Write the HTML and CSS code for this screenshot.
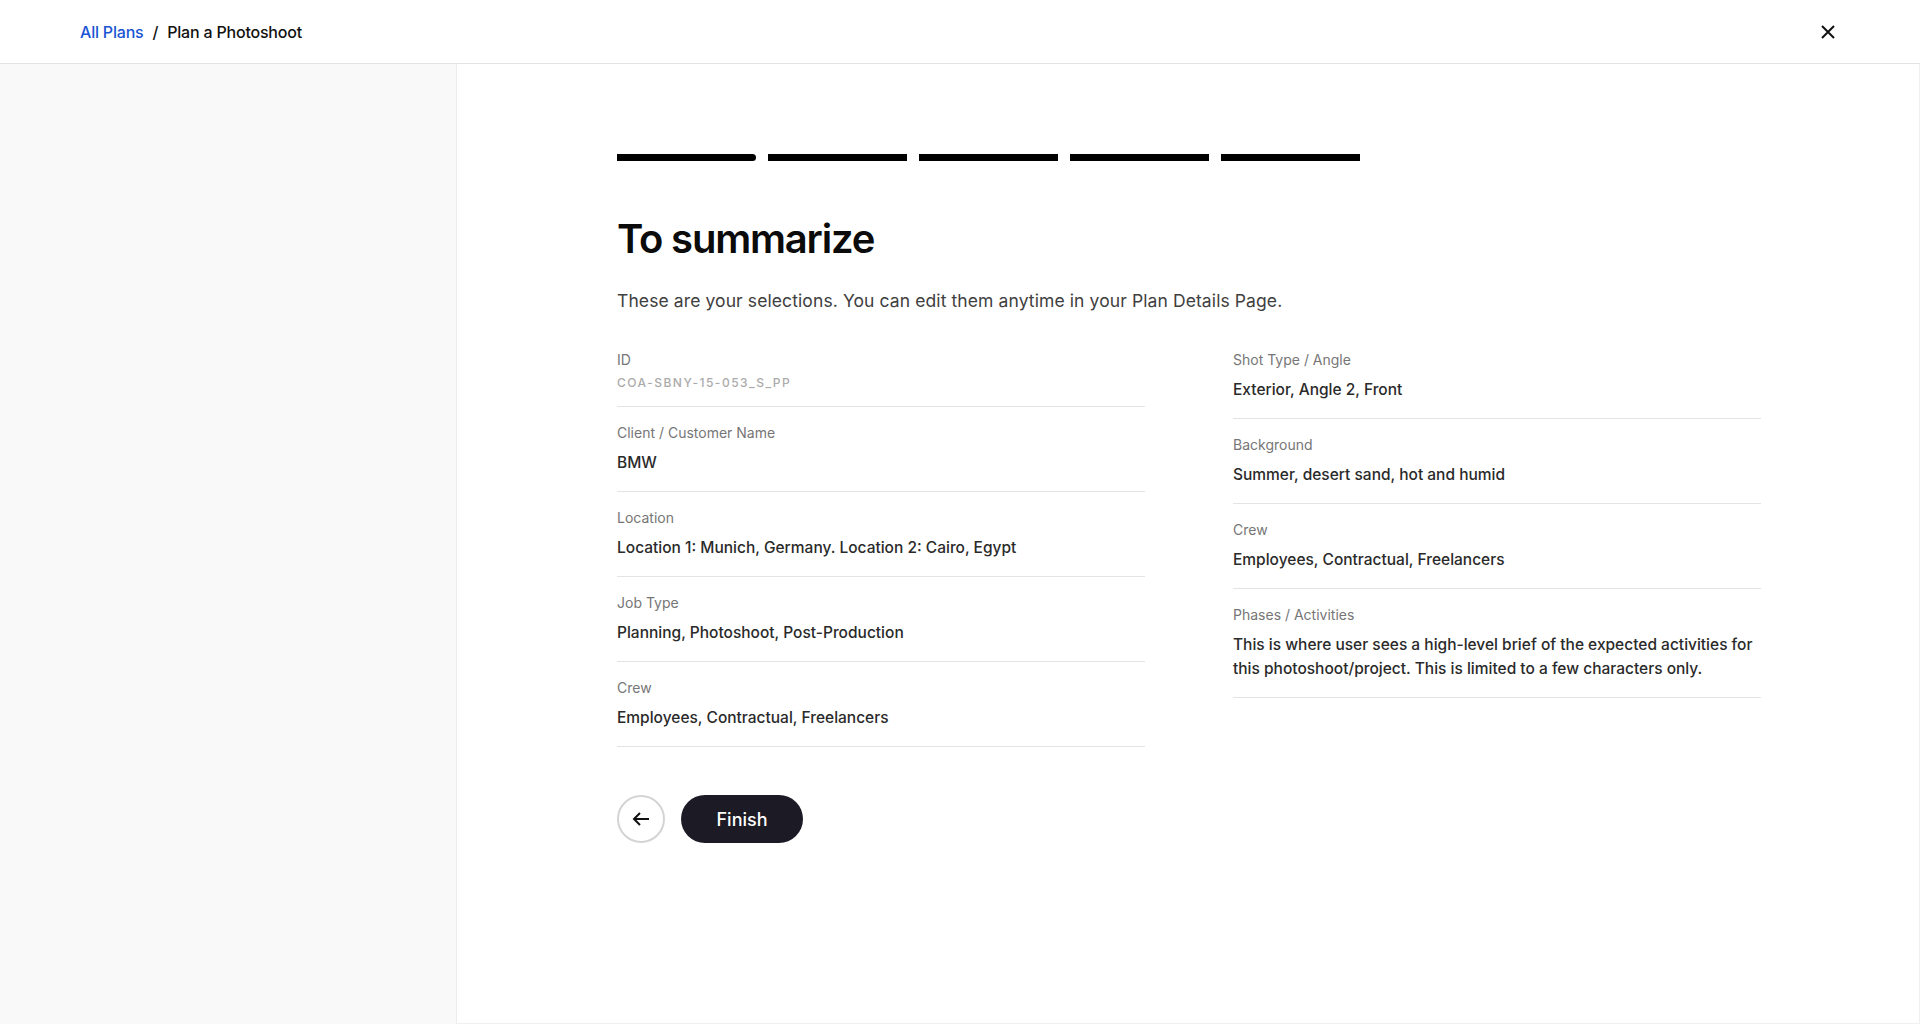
FILE: index.html
```html
<!DOCTYPE html>
<html lang="en">
<head>
  <meta charset="UTF-8" />
  <meta name="viewport" content="width=device-width, initial-scale=1.0"/>
  <title>Plan a Photoshoot</title>
  <link rel="stylesheet" href="styles.css">
</head>
<body>
  <header class="topbar">
    <nav class="breadcrumb">
      <a href="#" class="crumb-link">All Plans</a>
      <span class="crumb-sep">/</span>
      <span class="crumb-current">Plan a Photoshoot</span>
    </nav>
    <button class="close-btn" aria-label="Close">
      <svg width="14" height="14" viewBox="0 0 14 14">
        <path d="M1 1 L13 13 M13 1 L1 13" stroke="#111" stroke-width="2" fill="none"/>
      </svg>
    </button>
  </header>

  <div class="page">
    <aside class="sidebar"></aside>

    <main class="main">
      <div class="steps">
        <span class="step step-first"></span>
        <span class="step"></span>
        <span class="step"></span>
        <span class="step"></span>
        <span class="step"></span>
      </div>

      <h1 class="title">To summarize</h1>
      <p class="subtitle">These are your selections. You can edit them anytime in your Plan Details Page.</p>

      <div class="summary">
        <div class="summary-col">
          <div class="field">
            <div class="field-label">ID</div>
            <div class="field-code">COA-SBNY-15-053_S_PP</div>
          </div>
          <div class="field">
            <div class="field-label">Client / Customer Name</div>
            <div class="field-value">BMW</div>
          </div>
          <div class="field">
            <div class="field-label">Location</div>
            <div class="field-value">Location 1: Munich, Germany. Location 2: Cairo, Egypt</div>
          </div>
          <div class="field">
            <div class="field-label">Job Type</div>
            <div class="field-value">Planning, Photoshoot, Post-Production</div>
          </div>
          <div class="field">
            <div class="field-label">Crew</div>
            <div class="field-value">Employees, Contractual, Freelancers</div>
          </div>
        </div>

        <div class="summary-col">
          <div class="field">
            <div class="field-label">Shot Type / Angle</div>
            <div class="field-value">Exterior, Angle 2, Front</div>
          </div>
          <div class="field">
            <div class="field-label">Background</div>
            <div class="field-value">Summer, desert sand, hot and humid</div>
          </div>
          <div class="field">
            <div class="field-label">Crew</div>
            <div class="field-value">Employees, Contractual, Freelancers</div>
          </div>
          <div class="field">
            <div class="field-label">Phases / Activities</div>
            <div class="field-value">This is where user sees a high-level brief of the expected activities for this photoshoot/project. This is limited to a few characters only.</div>
          </div>
        </div>
      </div>

      <div class="actions">
        <button class="btn-back" aria-label="Back">
          <svg width="20" height="20" viewBox="0 0 20 20">
            <path d="M18 10 H3 M9 4 L3 10 L9 16" stroke="#111" stroke-width="2" fill="none"/>
          </svg>
        </button>
        <button class="btn-finish">Finish</button>
      </div>
    </main>
  </div>
</body>
</html>
```

FILE: styles.css
```css
* {
  margin: 0;
  padding: 0;
  box-sizing: border-box;
}

body {
  font-family: Inter, 'Noto Sans', sans-serif;
  color: #1a1a1a;
  background: #fff;
  height: 100vh;
  overflow: hidden;
}

.topbar {
  height: 64px;
  border-bottom: 1px solid #e3e3e3;
  display: flex;
  align-items: center;
  justify-content: space-between;
  padding: 0 85px 0 80px;
}

.breadcrumb {
  display: flex;
  align-items: center;
  gap: 9px;
  font-size: 16px;
  font-weight: 500;
  letter-spacing: -0.2px;
}

.crumb-link {
  color: #1a55d4;
  text-decoration: none;
}

.crumb-sep,
.crumb-current {
  color: #111;
}

.close-btn {
  background: none;
  border: none;
  cursor: pointer;
  display: flex;
}

.page {
  display: flex;
  height: calc(100vh - 64px);
}

.sidebar {
  width: 457px;
  background: #f9f9f9;
  border-right: 1px solid #ececec;
}

.main {
  flex: 1;
  padding: 90px 158px 0 160px;
  border-right: 1px solid #f0f0f0;
  border-bottom: 1px solid #f0f0f0;
}

.steps {
  display: flex;
  gap: 12px;
}

.step {
  width: 139px;
  height: 7px;
  background: #000;
}

.step-first {
  border-radius: 0 4px 4px 0;
}

.title {
  margin-top: 54px;
  font-size: 40px;
  line-height: 48px;
  font-weight: 600;
  color: #0b0b0b;
  letter-spacing: -1.2px;
}

.subtitle {
  margin-top: 25px;
  font-size: 17.5px;
  line-height: 26px;
  letter-spacing: 0.1px;
  color: #404040;
}

.summary {
  display: grid;
  grid-template-columns: 1fr 1fr;
  column-gap: 88px;
  margin-top: 20px;
  align-items: start;
}

.field {
  padding: 16px 0;
  border-bottom: 1px solid #e4e4e4;
}

.field-label {
  font-size: 14px;
  line-height: 20px;
  color: #767676;
}

.field-value {
  margin-top: 8px;
  font-size: 15.5px;
  line-height: 24px;
  font-weight: 500;
  color: #2a2a2a;
}

.field-code {
  margin-top: 6px;
  font-size: 12px;
  line-height: 14px;
  letter-spacing: 1.5px;
  font-weight: 500;
  color: #ababab;
}

.actions {
  display: flex;
  align-items: center;
  gap: 16px;
  margin-top: 48px;
}

.btn-back {
  width: 48px;
  height: 48px;
  border-radius: 50%;
  border: 2px solid #d4d4d4;
  background: #fff;
  display: flex;
  align-items: center;
  justify-content: center;
  cursor: pointer;
}

.btn-finish {
  height: 48px;
  width: 122px;
  border-radius: 24px;
  border: none;
  background: #1c1a24;
  color: #fff;
  font-family: inherit;
  font-size: 18px;
  font-weight: 500;
  cursor: pointer;
}
```
